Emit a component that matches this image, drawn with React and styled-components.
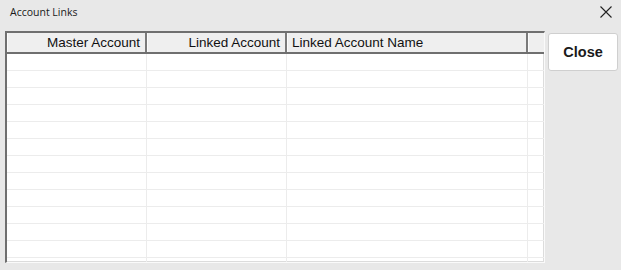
import React from 'react';
import styled, { createGlobalStyle } from 'styled-components';

const GlobalStyle = createGlobalStyle`
  html, body {
    margin: 0;
    padding: 0;
    background: #e8e8e8;
  }
  #root {
    width: 621px;
    height: 270px;
  }
`

const Dialog = styled.div`
  width: 621px;
  height: 270px;
  box-sizing: border-box;
  background: #e8e8e8;
  display: flex;
  flex-direction: column;
  font-family: "Liberation Sans", Arial, sans-serif;
`

const TitleBar = styled.div`
  height: 25px;
  display: flex;
  align-items: center;
  justify-content: space-between;
  padding: 0 10px 0 10px;
  .title{
    font-family: "Open Sans", "Noto Sans", sans-serif;
    font-size: 10.5px;
    color: #1a1a1a;
    margin-top: -2px;
  }
`

const CloseX = styled.button`
  border: none;
  background: transparent;
  padding: 0;
  width: 14px;
  height: 14px;
  display: flex;
  margin-right: -2px;
  margin-top: -2px;
`

const Body = styled.div`
  display: flex;
  gap: 3px;
  padding: 6px 3px 0 5px;
  align-items: flex-start;
`

const Grid = styled.div`
  width: 542px;
  height: 232px;
  box-sizing: border-box;
  border-top: 2px solid #6f6f6f;
  border-left: 2px solid #6f6f6f;
  border-right: 1px solid #fafafa;
  border-bottom: 1px solid #fafafa;
  box-shadow: inset -1px -1px 0 #dcdcdc;
  background: #fff;
  overflow: hidden;
  display: flex;
  flex-direction: column;
`

const HeaderRow = styled.div`
  display: flex;
  height: 19px;
  background: #efefef;
  border-bottom: 2px solid #6f6f6f;
  flex-shrink: 0;
`

const HeaderCell = styled.div`
  width: ${p => p.w}px;
  box-sizing: border-box;
  flex-shrink: 0;
  border-right: ${p => p.last ? 'none' : '2px solid #7a7a7a'};
  box-shadow: inset 1px 0 0 #fbfbfb;
  display: flex;
  align-items: center;
  justify-content: ${p => p.align === 'left' ? 'flex-start' : 'flex-end'};
  padding: 0 5px 0 5px;
  font-size: 13.5px;
  color: #111;
  white-space: nowrap;
`

const Row = styled.div`
  display: flex;
  height: 17px;
  box-sizing: border-box;
  border-bottom: 1px solid #ececec;
  flex-shrink: 0;
`

const Cell = styled.div`
  width: ${p => p.w}px;
  box-sizing: border-box;
  flex-shrink: 0;
  border-right: ${p => p.last ? 'none' : '1px solid #ececec'};
`

const CloseButton = styled.button`
  width: 70px;
  height: 38px;
  margin-top: 2px;
  background: #fff;
  border: 1px solid #cfcfcf;
  border-radius: 3px;
  font-family: "Liberation Sans", Arial, sans-serif;
  font-weight: bold;
  font-size: 14.5px;
  color: #1a1a1a;
  padding: 0;
`

const columns = [
  { label: 'Master Account', w: 140, align: 'right' },
  { label: 'Linked Account', w: 140, align: 'right' },
  { label: 'Linked Account Name', w: 241, align: 'left' },
  { label: '', w: 20, align: 'left', last: true },
]

const rows = Array.from({ length: 13 })

export default function App() {
  return (
    <>
      <GlobalStyle />
      <Dialog>
        <TitleBar>
          <span className="title">Account Links</span>
          <CloseX aria-label="close">
            <svg width="14" height="14" viewBox="0 0 14 14">
              <path d="M1.5 1.5 L12.5 12.5 M12.5 1.5 L1.5 12.5" stroke="#222" strokeWidth="1.1" fill="none" />
            </svg>
          </CloseX>
        </TitleBar>
        <Body>
          <Grid>
            <HeaderRow>
              {columns.map((c, i) => (
                <HeaderCell key={i} w={c.w} align={c.align} last={c.last}>{c.label}</HeaderCell>
              ))}
            </HeaderRow>
            {rows.map((_, r) => (
              <Row key={r}>
                {columns.map((c, i) => (
                  <Cell key={i} w={c.w} last={c.last} />
                ))}
              </Row>
            ))}
          </Grid>
          <CloseButton>Close</CloseButton>
        </Body>
      </Dialog>
    </>
  )
}
